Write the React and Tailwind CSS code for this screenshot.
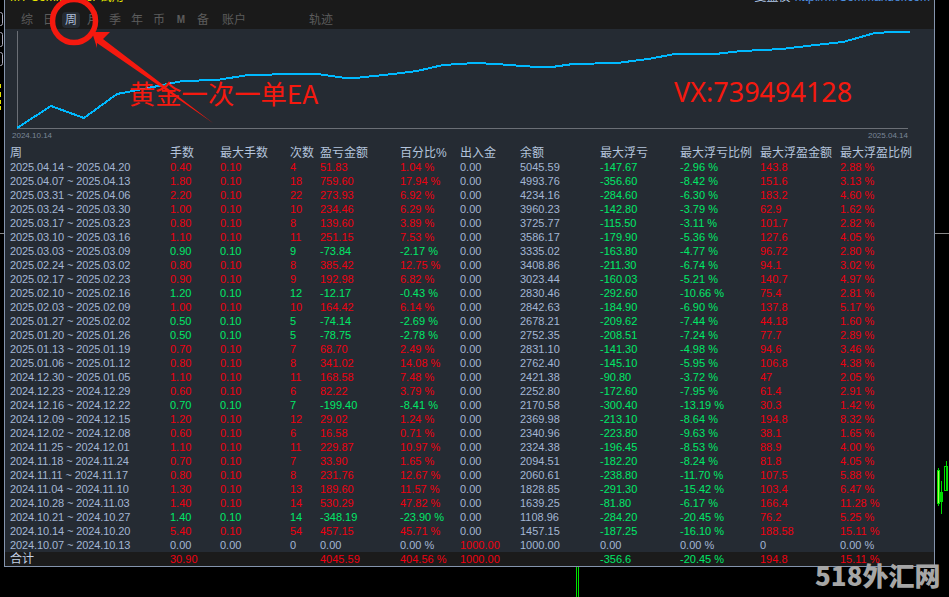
import React from 'react';

const RED = 'text-[#ee0010]';
const GREEN = 'text-[#00e868]';
const BLUE = 'text-[#a3b6d4]';
const COLS = 'grid grid-cols-[160px_50px_70px_30px_80px_60px_60px_80px_80px_80px_80px_1fr]';

// week, lots, trades, profit, pct, balance, max loss, loss pct, max gain, gain pct
const rows = [
    ['2025.04.14 ~ 2025.04.20', '0.40', '4', '51.83', '1.04', '5045.59', '-147.67', '-2.96', '143.8', '2.88'],
    ['2025.04.07 ~ 2025.04.13', '1.80', '18', '759.60', '17.94', '4993.76', '-356.60', '-8.42', '151.6', '3.13'],
    ['2025.03.31 ~ 2025.04.06', '2.20', '22', '273.93', '6.92', '4234.16', '-284.60', '-6.30', '183.2', '4.60'],
    ['2025.03.24 ~ 2025.03.30', '1.00', '10', '234.46', '6.29', '3960.23', '-142.80', '-3.79', '62.9', '1.62'],
    ['2025.03.17 ~ 2025.03.23', '0.80', '8', '139.60', '3.89', '3725.77', '-115.50', '-3.11', '101.7', '2.82'],
    ['2025.03.10 ~ 2025.03.16', '1.10', '11', '251.15', '7.53', '3586.17', '-179.90', '-5.36', '127.6', '4.05'],
    ['2025.03.03 ~ 2025.03.09', '0.90', '9', '-73.84', '-2.17', '3335.02', '-163.80', '-4.77', '96.72', '2.80'],
    ['2025.02.24 ~ 2025.03.02', '0.80', '8', '385.42', '12.75', '3408.86', '-211.30', '-6.74', '94.1', '3.02'],
    ['2025.02.17 ~ 2025.02.23', '0.90', '9', '192.98', '6.82', '3023.44', '-160.03', '-5.21', '140.7', '4.97'],
    ['2025.02.10 ~ 2025.02.16', '1.20', '12', '-12.17', '-0.43', '2830.46', '-292.60', '-10.66', '75.4', '2.81'],
    ['2025.02.03 ~ 2025.02.09', '1.00', '10', '164.42', '6.14', '2842.63', '-184.90', '-6.90', '137.8', '5.17'],
    ['2025.01.27 ~ 2025.02.02', '0.50', '5', '-74.14', '-2.69', '2678.21', '-209.62', '-7.44', '44.18', '1.60'],
    ['2025.01.20 ~ 2025.01.26', '0.50', '5', '-78.75', '-2.78', '2752.35', '-208.51', '-7.24', '77.7', '2.89'],
    ['2025.01.13 ~ 2025.01.19', '0.70', '7', '68.70', '2.49', '2831.10', '-141.30', '-4.98', '94.6', '3.46'],
    ['2025.01.06 ~ 2025.01.12', '0.80', '8', '341.02', '14.08', '2762.40', '-145.10', '-5.95', '106.8', '4.38'],
    ['2024.12.30 ~ 2025.01.05', '1.10', '11', '168.58', '7.48', '2421.38', '-90.80', '-3.72', '47', '2.05'],
    ['2024.12.23 ~ 2024.12.29', '0.60', '6', '82.22', '3.79', '2252.80', '-172.60', '-7.95', '61.4', '2.91'],
    ['2024.12.16 ~ 2024.12.22', '0.70', '7', '-199.40', '-8.41', '2170.58', '-300.40', '-13.19', '30.3', '1.42'],
    ['2024.12.09 ~ 2024.12.15', '1.20', '12', '29.02', '1.24', '2369.98', '-213.10', '-8.64', '194.8', '8.32'],
    ['2024.12.02 ~ 2024.12.08', '0.60', '6', '16.58', '0.71', '2340.96', '-223.80', '-9.63', '38.1', '1.65'],
    ['2024.11.25 ~ 2024.12.01', '1.10', '11', '229.87', '10.97', '2324.38', '-196.45', '-8.53', '88.9', '4.00'],
    ['2024.11.18 ~ 2024.11.24', '0.70', '7', '33.90', '1.65', '2094.51', '-182.20', '-8.24', '81.8', '4.05'],
    ['2024.11.11 ~ 2024.11.17', '0.80', '8', '231.76', '12.67', '2060.61', '-238.80', '-11.70', '107.5', '5.88'],
    ['2024.11.04 ~ 2024.11.10', '1.30', '13', '189.60', '11.57', '1828.85', '-291.30', '-15.42', '103.4', '6.47'],
    ['2024.10.28 ~ 2024.11.03', '1.40', '14', '530.29', '47.82', '1639.25', '-81.80', '-6.17', '166.4', '11.28'],
    ['2024.10.21 ~ 2024.10.27', '1.40', '14', '-348.19', '-23.90', '1108.96', '-284.20', '-20.45', '76.2', '5.25'],
    ['2024.10.14 ~ 2024.10.20', '5.40', '54', '457.15', '45.71', '1457.15', '-187.25', '-16.10', '188.58', '15.11'],
];

const headers = ['周', '手数', '最大手数', '次数', '盈亏金额', '百分比%', '出入金', '余额', '最大浮亏', '最大浮亏比例', '最大浮盈金额', '最大浮盈比例'];
const tabs = ['综', '日', '周', '月', '季', '年', '币', 'M', '备'];

const curve = '17,128 51,106 84,118 117,94 143,89 168,84 182,81 217,80 248,75 297,74 318,74 345,78 355,78 393,74 417,71 443,65 475,63 497,64 522,66 538,67 552,67 573,64 617,63 648,59 675,54 693,54 715,54 742,51 782,49 815,45 843,42 875,33 893,32 910,32';

function Row({ r }) {
    const tone = r[3].startsWith('-') ? GREEN : RED;
    return (
        <div className={`${COLS} h-[14px] leading-[14px]`}>
            <span className={`${BLUE} tracking-[-0.1px]`}>{r[0]}</span>
            <span className={tone}>{r[1]}</span>
            <span className={tone}>0.10</span>
            <span className={tone}>{r[2]}</span>
            <span className={tone}>{r[3]}</span>
            <span className={tone}>{r[4]} %</span>
            <span className={BLUE}>0.00</span>
            <span className={BLUE}>{r[5]}</span>
            <span className={GREEN}>{r[6]}</span>
            <span className={GREEN}>{r[7]} %</span>
            <span className={RED}>{r[8]}</span>
            <span className={RED}>{r[9]} %</span>
        </div>
    );
}

export default function App() {
    return (
        <div className="relative w-[949px] h-[597px] bg-black overflow-hidden font-['Liberation_Sans','Noto_Sans_CJK_SC',sans-serif] text-[11px]">
            <div className="flex h-[567px]">
                {/* left edge of the terminal behind */}
                <svg width="4" height="567" className="shrink-0">
                    <rect x="-4" y="12.5" width="6.5" height="13" rx="2" fill="none" stroke="#aab" />
                    <rect x="-4" y="32.5" width="6.5" height="14" rx="2" fill="none" stroke="#aab" />
                    <rect x="-4" y="52.5" width="6.5" height="13" rx="2" fill="none" stroke="#aab" />
                    <path d="M0.5 84v4M0.5 92v5M0.5 100v4M0.5 106v4" stroke="#e6e600" />
                    <path d="M0 233.5h4" stroke="#888" />
                </svg>

                <div className="w-[931px] flex flex-col bg-[#252b33] border-x border-b border-[#8494ad]">
                    <div className="h-[29px] bg-[#1a1a1a] flex flex-col">
                        <div className="h-[4px] overflow-hidden flex justify-between items-end pl-[5px] pr-[4px] text-[12px] leading-[14px]">
                            <span className="text-[#e8e800]">MT Commander 试用</span>
                            <span className="flex gap-[4px]">
                                <span className="text-[#b0c8e8]">复盘仪</span>
                                <span className="text-[#4d8fe0]">http://mrCommander.com</span>
                            </span>
                        </div>
                        <div className="mt-[8px] h-[16px] pl-[11px] flex items-stretch text-[12px] leading-[16px] text-[#5c5c5c]">
                            {tabs.map((t) => (
                                <div key={t} className="w-[22px] flex justify-center">
                                    {t === '周'
                                        ? <span className="px-[3px] rounded-sm bg-[#252b33] text-[#aebfd8]">{t}</span>
                                        : <span className={t === 'M' ? 'text-[10px] font-bold' : ''}>{t}</span>}
                                </div>
                            ))}
                            <span className="w-[40px] text-center">账户</span>
                            <span className="w-[40px] text-center ml-[47px]">轨迹</span>
                        </div>
                    </div>

                    <svg viewBox="5 29 929 101" className="w-[929px] h-[101px] shrink-0">
                        <path d="M17.5 31V128.5H908" fill="none" stroke="#6b6f76" />
                        <polyline points={curve} fill="none" stroke="#00b9ff" strokeWidth="2" shapeRendering="crispEdges" />
                    </svg>
                    <div className="h-[16px] flex justify-between pl-[7px] pr-[26px] text-[8px] leading-[12px] text-[#7a8698]">
                        <span>2024.10.14</span>
                        <span>2025.04.14</span>
                    </div>

                    <div className="pl-[5px]">
                        <div className={`${COLS} h-[14px] text-[12px] leading-[14px] text-[#b4c4dc]`}>
                            {headers.map((h) => <span key={h} className="whitespace-nowrap">{h}</span>)}
                        </div>
                        {rows.map((r) => <Row key={r[0]} r={r} />)}
                        <div className={`${COLS} h-[14px] leading-[14px]`}>
                            <span className={`${BLUE} tracking-[-0.1px]`}>2024.10.07 ~ 2024.10.13</span>
                            <span className={BLUE}>0.00</span>
                            <span className={BLUE}>0.00</span>
                            <span className={BLUE}>0</span>
                            <span className={BLUE}>0.00</span>
                            <span className={BLUE}>0.00 %</span>
                            <span className={RED}>1000.00</span>
                            <span className={BLUE}>1000.00</span>
                            <span className={BLUE}>0.00</span>
                            <span className={BLUE}>0.00 %</span>
                            <span className={BLUE}>0</span>
                            <span className={BLUE}>0.00 %</span>
                        </div>
                    </div>
                    <div className={`${COLS} flex-1 overflow-hidden bg-[#1b1b1b] pl-[5px] leading-[14px]`}>
                        <span className="text-[12px] text-[#c4d2e6]">合计</span>
                        <span className={RED}>30.90</span>
                        <span />
                        <span />
                        <span className={RED}>4045.59</span>
                        <span className={RED}>404.56 %</span>
                        <span className={RED}>1000.00</span>
                        <span />
                        <span className={GREEN}>-356.6</span>
                        <span className={GREEN}>-20.45 %</span>
                        <span className={RED}>194.8</span>
                        <span className={RED}>15.11 %</span>
                    </div>
                </div>

                {/* chart candles on the right edge */}
                <svg width="14" height="567" className="shrink-0">
                    <path d="M0 233.5h14" stroke="#888" />
                    <path d="M3.5 468v38M6.5 481v33M11.5 461v30" stroke="#00d800" />
                    <rect x="2.5" y="470.5" width="2" height="33" fill="#b4ff50" stroke="#00e000" />
                    <rect x="5.5" y="492.5" width="2" height="9" fill="none" stroke="#00e000" />
                    <rect x="9.5" y="466.5" width="3" height="24" fill="none" stroke="#00e000" />
                </svg>
            </div>

            <div className="pl-[576px]">
                <div className="w-[3px] h-[30px] border-x border-[#00e000]" />
            </div>

            {/* red annotation drawn over the screenshot */}
            <svg width="949" height="597" className="absolute left-0 top-0 pointer-events-none">
                <circle cx="74" cy="21" r="21.5" fill="none" stroke="#f5190f" strokeWidth="5.5" />
                <polygon points="92,32 110,32 103,39 213,123 97,43 97,48" fill="#f5190f" />
            </svg>
            <span className="absolute left-[129px] top-[74px] text-[26.3px] leading-[38px] whitespace-nowrap text-[#f5190f] font-['Noto_Sans_CJK_SC',sans-serif]">黄金一次一单EA</span>
            <span className="absolute left-[674px] top-[73px] text-[27px] leading-[38px] whitespace-nowrap text-[#f5190f] font-['Noto_Sans',sans-serif]">VX:739494128</span>
            <span className="absolute left-[815px] top-[556px] text-[26px] leading-[38px] whitespace-nowrap font-black text-[#a6a6a6] font-['Noto_Sans_CJK_SC',sans-serif]">518外汇网</span>
        </div>
    );
}
